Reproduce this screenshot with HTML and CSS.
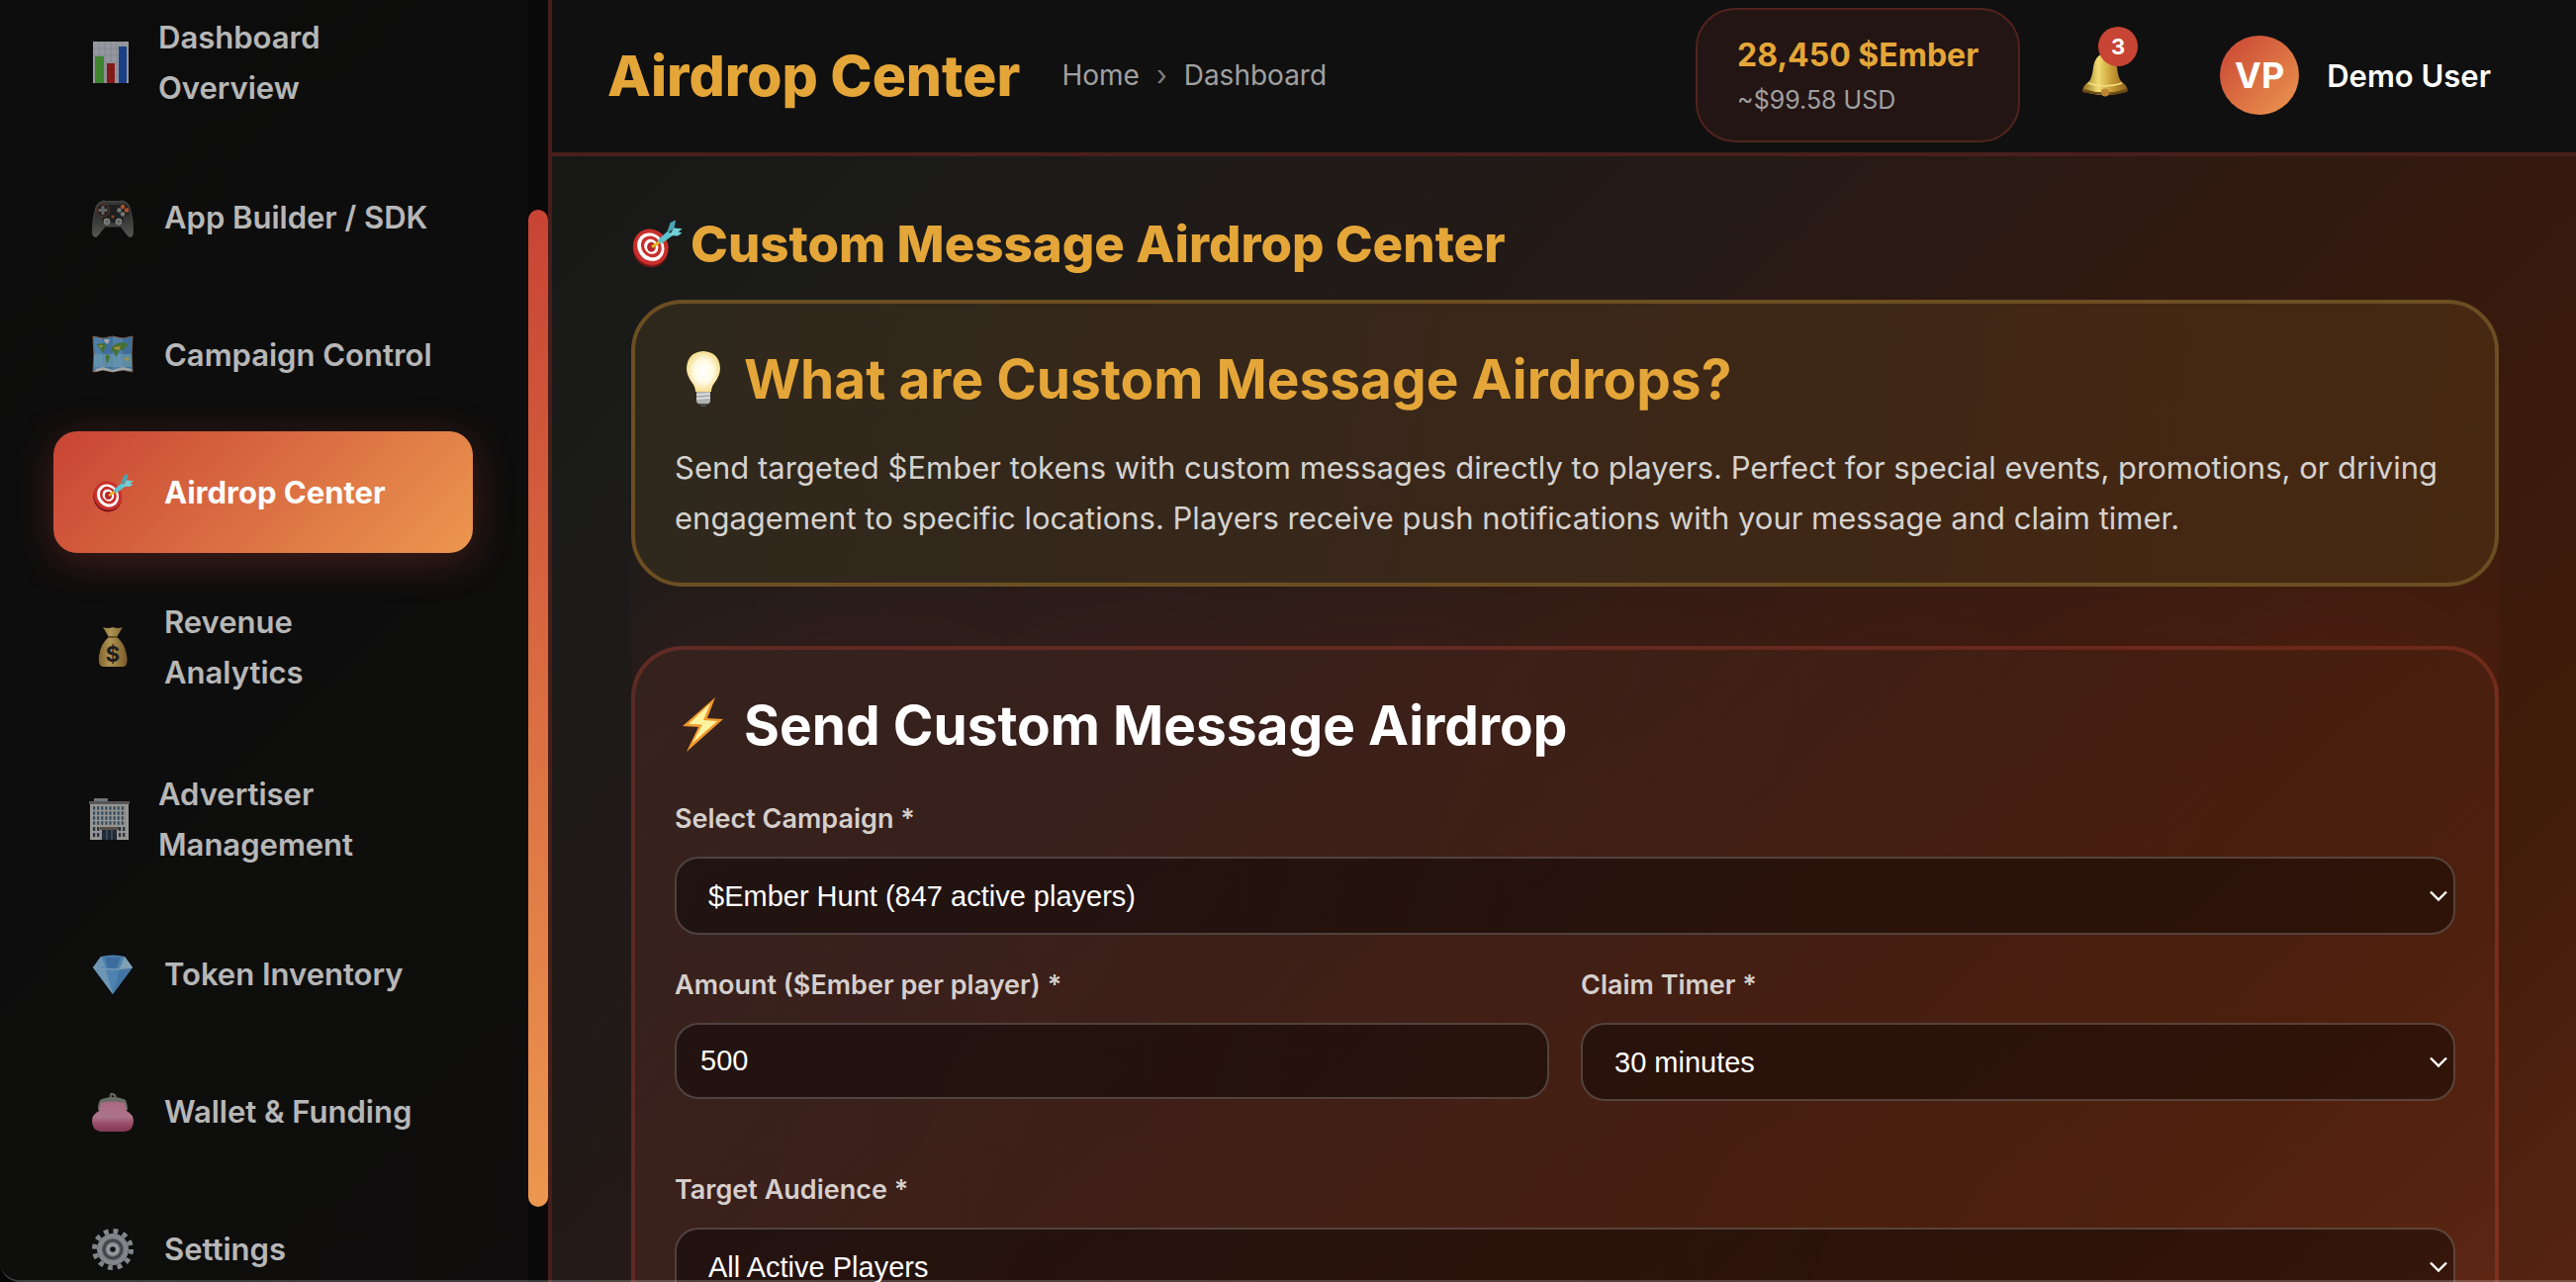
FILE: index.html
```html
<!DOCTYPE html>
<html lang="en">
<head>
<meta charset="utf-8">
<meta name="viewport" content="width=device-width, initial-scale=1">
<title>Airdrop Center</title>
<link rel="stylesheet" href="styles.css">
</head>
<body>
<svg class="defs" aria-hidden="true">
  <defs>
    <linearGradient id="brass" x1="0" y1="0" x2="1" y2="0">
      <stop offset="0" stop-color="#8a6a1c"/><stop offset=".35" stop-color="#f3dc72"/><stop offset=".65" stop-color="#c79a35"/><stop offset="1" stop-color="#8a5f1a"/>
    </linearGradient>
    <linearGradient id="sack" x1="0" y1="0" x2="1" y2="0">
      <stop offset="0" stop-color="#b48a3c"/><stop offset=".4" stop-color="#f2cf72"/><stop offset="1" stop-color="#a87a34"/>
    </linearGradient>
    <linearGradient id="pad" x1="0" y1="0" x2="0" y2="1">
      <stop offset="0" stop-color="#4c4f4e"/><stop offset=".35" stop-color="#3a3c3b"/><stop offset="1" stop-color="#747673"/>
    </linearGradient>
    <linearGradient id="purse" x1="0" y1="0" x2="0" y2="1">
      <stop offset="0" stop-color="#ef8db3"/><stop offset=".5" stop-color="#f0a2c0"/><stop offset=".75" stop-color="#d4648f"/><stop offset="1" stop-color="#b04a72"/>
    </linearGradient>
    <radialGradient id="glow" cx=".5" cy=".5" r=".55">
      <stop offset="0" stop-color="#ffffff"/><stop offset=".5" stop-color="#fffbe6"/><stop offset="1" stop-color="#f3d77c"/>
    </radialGradient>
    <symbol id="target" viewBox="0 0 42 42">
      <ellipse cx="15" cy="26" rx="14" ry="15" fill="#7f1518" transform="rotate(-35 15 25)"/>
      <ellipse cx="16" cy="24" rx="14" ry="15" fill="#c9302c" transform="rotate(-35 16 24)"/>
      <ellipse cx="16" cy="24" rx="10.500" ry="12" fill="#fff" transform="rotate(-35 16 24)"/>
      <ellipse cx="16.500" cy="24" rx="8" ry="9.200" fill="#c9302c" transform="rotate(-35 16 24)"/>
      <ellipse cx="16.500" cy="24" rx="5.500" ry="6.300" fill="#fff" transform="rotate(-35 16 24)"/>
      <ellipse cx="16.500" cy="24" rx="3.500" ry="4" fill="#b5262a"/>
      <path d="M17 24 L23 20" stroke="#e6b422" stroke-width="2.500"/>
      <path d="M21.500 18.500 L30 11 L34 14.500 L24.500 21.500 Z" fill="#5cc4cf"/>
      <path d="M29 13 L32 4 L36.500 2 L35 9 Z" fill="#4aa5b4"/>
      <path d="M31 14.500 L35 8.500 L42 9 L38.500 11.500 L41.500 12.500 L38 15 Z" fill="#73cfd8"/>
    </symbol>
  </defs>
</svg>

<div class="app">
  <aside class="sidebar">
    <nav class="nav" aria-label="Main">
      <a class="nav-item" href="#">
        <span class="nav-icon nav-icon--tight">
          <svg viewBox="0 0 42 42"><path fill="#cfd3dd" d="M4 0h36v42H4z"/><path stroke="#aab0c0" stroke-width=".6" d="M4 7h36M4 14h36M4 21h36M4 28h36M4 35h36M10 0v42M16 0v42M22 0v42M28 0v42M34 0v42"/><path fill="#53b83a" d="M6 15h9v27H6z"/><path fill="#b7201c" d="M18 22h8v20h-8z"/><path fill="#2457bd" d="M30 5h8v37h-8z"/></svg>
        </span>
        <span>Dashboard<br>Overview</span>
      </a>
      <a class="nav-item" href="#">
        <span class="nav-icon">
          <svg viewBox="0 0 42 42"><path fill="url(#pad)" stroke="#6d6f6c" stroke-width=".8" d="M9 5Q11 3 14 4.500H28Q31 3 33 5Q37 6 38.500 12Q42 24 41.500 37Q41 41 38 40.500Q36 40 33 35L29 30H13L9 35Q6 40 4 40.500Q1 41 .5 37Q0 24 3.500 12Q5 6 9 5Z"/><path fill="#262827" d="M13 8h16l3 18H10z"/><circle cx="11" cy="13.500" r="6.500" fill="#2a2b2a" stroke="#8a4a2c"/><path stroke="#858886" stroke-width="3" d="M11 9v9M6.500 13.500h9"/><circle cx="31" cy="13.500" r="6.500" fill="#2b2c2b"/><circle cx="31" cy="10" r="2.200" fill="#f07030"/><circle cx="35" cy="13.500" r="2.200" fill="#f07030"/><circle cx="27.500" cy="13.500" r="2.200" fill="#a4a6a5"/><circle cx="31" cy="17.500" r="2.200" fill="#a4a6a5"/><circle cx="21" cy="20" r="1.500" fill="#c7562a"/><g fill="#8d908e" stroke="#c6c8c6"><circle cx="15" cy="25" r="3"/><circle cx="27" cy="25" r="3"/></g></svg>
        </span>
        <span>App Builder / SDK</span>
      </a>
      <a class="nav-item" href="#">
        <span class="nav-icon">
          <svg viewBox="0 0 42 42"><path fill="#6bb0ea" stroke="#b08058" d="M1 2L11 4L21 2L31 4L41 2L40 20L41 38L31 36L21 38L11 36L1 38L2 20Z"/><path fill="#3f81bf" d="M11 4l10-2v36l-10-2zM31 4l9-2v36l-9-2z" opacity=".5"/><path fill="#9adcf5" d="M2 20h38v13H2z" opacity=".6"/><path fill="#5c9a48" d="M4 10l7-1 4 2-3 5-2 3-2-5zM14 20l4 2-1 4-2 4-1-6zM21 12l4-3 8-1 4 3-4 3-2 3-3-2-2 5-2 3-2-5-3-2z"/><path fill="#e8c84e" d="M22 13l7-1-2 4-4-1zM33 24l4-1v4l-4-1zM7 11l4 0-2 3z"/><path fill="#e5e9ea" d="M12 5l6 0-2 5-3-2zM4 35l7-2 10 3 10-3 9 2v2l-9-1-10 2-10-2-8 2z"/></svg>
        </span>
        <span>Campaign Control</span>
      </a>
      <a class="nav-item nav-item--active" href="#" aria-current="page">
        <span class="nav-icon"><svg viewBox="0 0 42 42"><use href="#target"/></svg></span>
        <span>Airdrop Center</span>
      </a>
      <a class="nav-item" href="#">
        <span class="nav-icon">
          <svg viewBox="0 0 42 42"><path fill="url(#sack)" d="M11 1Q16 3 21 1Q26 3 31 1L25 11Q33 17 35 29Q37 41 31 41H11Q6 41 7 30Q9 17 17 11Z"/><path stroke="#765524" stroke-width="1.500" d="M16 11h10"/><text class="sack-sign" x="21" y="36" text-anchor="middle">$</text></svg>
        </span>
        <span>Revenue<br>Analytics</span>
      </a>
      <a class="nav-item" href="#">
        <span class="nav-icon nav-icon--tight">
          <svg viewBox="0 0 42 42"><path fill="#9d9fa2" d="M5 0h14v4H5z"/><path fill="#d0cdca" d="M1 5h39v37H1z"/><path fill="#77757a" d="M0 3h41v3H0z"/><g stroke="#3f6784" stroke-width="3.500" stroke-dasharray="2.200 1.900"><path d="M4 10h33M4 15h33M4 20h33M4 25h33"/></g><g stroke="#2d4058" stroke-width="4" stroke-dasharray="2.200 1.900"><path d="M4 31h7M30 31h8M4 37h7M30 37h8"/></g><path fill="#76685f" d="M11 29h19v3H11z"/><path fill="#28384c" d="M13 32h15v10H13z"/><path stroke="#7c8a98" d="M18 32v10M23 32v10"/></svg>
        </span>
        <span>Advertiser<br>Management</span>
      </a>
      <a class="nav-item" href="#">
        <span class="nav-icon">
          <svg viewBox="0 0 42 42"><path fill="#6ab4f4" d="M9 3Q21 0 33 3L41 14L21 41L1 14Z"/><path fill="#96cef8" d="M9 3L14 14L1 14Z"/><path fill="#4f93d8" d="M13 3.500h16l-4 11h-9z"/><path fill="#b4e0fc" d="M33 3l8 11-13 1z"/><path fill="#94d0fa" d="M1 14l13 2 7 25z"/><path fill="#5a9fe4" d="M28 16l13-2-20 27z"/><path fill="none" stroke="#c5e5fb" stroke-width=".8" d="M1 14q20 4 40 0"/></svg>
        </span>
        <span>Token Inventory</span>
      </a>
      <a class="nav-item" href="#">
        <span class="nav-icon">
          <svg viewBox="0 0 42 42"><path fill="none" stroke="#8d9188" stroke-width="2" d="M19 7q-1-5 2-4t3 5"/><path fill="#8f938c" d="M10 8Q21 4 32 8Q36 9 36 19H6Q6 9 10 8Z"/><path fill="url(#purse)" d="M9 12Q21 9 33 12L35 20Q42 24 42 30Q42 40 33 41H9Q0 40 0 30Q0 24 7 20Z"/></svg>
        </span>
        <span>Wallet &amp; Funding</span>
      </a>
      <a class="nav-item" href="#">
        <span class="nav-icon">
          <svg viewBox="0 0 42 42"><circle cx="21" cy="21" r="18.500" fill="none" stroke="#b4bac0" stroke-width="5" stroke-dasharray="4.800 4.887"/><circle cx="21" cy="21" r="13.500" fill="#777c82" stroke="#b4bac0" stroke-width="5"/><circle cx="21" cy="21" r="9" fill="none" stroke="#4e5358" stroke-width="1.500"/><circle cx="21" cy="21" r="4.800" fill="#16171a" stroke="#ccd1d6" stroke-width="4"/></svg>
        </span>
        <span>Settings</span>
      </a>
    </nav>
    <div class="track"><div class="thumb"></div></div>
  </aside>

  <div class="page">
    <header class="topbar">
      <h1 class="topbar-title">Airdrop Center</h1>
      <nav class="crumbs" aria-label="Breadcrumb">
        <a href="#">Home</a><span class="crumb-sep">›</span><span>Dashboard</span>
      </nav>
      <div class="topbar-tools">
        <div class="balance">
          <strong class="balance-amount">28,450 $Ember</strong>
          <span class="balance-usd">~$99.58 USD</span>
        </div>
        <button class="bell" type="button" aria-label="Notifications">
          <svg viewBox="0 0 48 44"><path fill="url(#brass)" d="M24 0Q34 1 36 14Q37 24 40 28Q46 32 47 38Q36 42 24 42Q12 42 1 38Q2 32 8 28Q11 24 12 14Q14 1 24 0Z"/><path fill="#6c4a16" d="M2 36Q24 43 46 36L46 39Q36 42 24 42Q12 42 1 39Z"/><path fill="none" stroke="#f5df82" stroke-width="1.500" d="M7 30Q24 36 41 30"/><circle cx="24" cy="39.500" r="4" fill="#b98432"/></svg>
          <span class="badge">3</span>
        </button>
        <div class="user">
          <span class="avatar">VP</span>
          <span>Demo User</span>
        </div>
      </div>
    </header>

    <main class="content">
      <h2 class="page-title"><svg viewBox="0 0 42 42" aria-hidden="true"><use href="#target"/></svg>Custom Message Airdrop Center</h2>

      <section class="card card--info">
        <h3 class="card-title">
          <svg viewBox="0 0 56 56" aria-hidden="true"><path fill="url(#glow)" d="M29 0Q45 1 46 17Q46 24 41 31Q37 36 37 41H21Q21 36 17 31Q12 24 12 17Q13 1 29 0Z"/><path fill="#aeb0b2" d="M22 41h14v10q-1 3-7 3t-7-3z"/><path stroke="#e4e4e4" stroke-width="1.500" d="M22 44l14-1M22 48l14-1"/><path fill="#4a4b4d" d="M25 53h8l-2 3h-4z"/></svg>
          What are Custom Message Airdrops?
        </h3>
        <p class="card-text">Send targeted $Ember tokens with custom messages directly to players. Perfect for special events, promotions, or driving engagement to specific locations. Players receive push notifications with your message and claim timer.</p>
      </section>

      <section class="card card--form">
        <h3 class="card-title">
          <svg viewBox="0 0 56 56" aria-hidden="true"><path fill="#f0982e" d="M41 0L8 29L24 30L12 55L49 22L33 21Z"/><path fill="#fff3a0" d="M36 6L14 27L28 27.500L18 46L43 24L29 23Z"/></svg>
          Send Custom Message Airdrop
        </h3>
        <form class="form">
          <div class="field">
            <label for="campaign">Select Campaign *</label>
            <select id="campaign"><option>$Ember Hunt (847 active players)</option></select>
          </div>
          <div class="row">
            <div class="field">
              <label for="amount">Amount ($Ember per player) *</label>
              <input id="amount" type="text" inputmode="numeric" value="500">
            </div>
            <div class="field">
              <label for="timer">Claim Timer *</label>
              <select id="timer"><option>30 minutes</option></select>
            </div>
          </div>
          <div class="field">
            <label for="audience">Target Audience *</label>
            <select id="audience"><option>All Active Players</option></select>
          </div>
        </form>
      </section>
    </main>
  </div>
</div>
</body>
</html>
```
FILE: styles.css
```css
* { box-sizing: border-box; }

:root {
  --red: #c84434;
  --orange: #ec974f;
  --gold: #e4a638;
  --line: rgba(200, 68, 52, 0.3);
  --fire: linear-gradient(135deg, var(--red), var(--orange));
}

body {
  margin: 0;
  height: 100vh;
  overflow: hidden;
  font-family: Inter, "Liberation Sans", sans-serif;
  font-size: 31px;
  line-height: 51px;
  color: #fff;
  background: linear-gradient(135deg, #101010 0%, #1b1b1a 28%, #241a17 48%, #35190e 70%, #421c0a 87%, #562412 100%);
}

/* window edge */
body::after {
  content: "";
  position: fixed;
  inset: 0;
  border-bottom: 2px solid rgba(255, 255, 255, 0.2);
  border-bottom-left-radius: 20px;
  box-shadow: 0 0 0 20px #050505;
  pointer-events: none;
}

h1, h2, h3, p { margin: 0; }
a { color: inherit; text-decoration: none; }
.defs { position: absolute; width: 0; height: 0; }

.app { display: flex; height: 100%; }

/* Sidebar */
.sidebar {
  display: flex;
  flex: 0 0 558px;
  overflow: hidden;
  background: rgba(12, 12, 12, 0.85);
  border-right: 4px solid var(--line);
}

.nav {
  flex: 1;
  display: flex;
  flex-direction: column;
  gap: 16px;
  padding: 0 56px 0 54px;
  margin-top: -16px;
}

.nav-item {
  display: flex;
  flex-shrink: 0;
  align-items: center;
  gap: 28px;
  padding: 28px 36px;
  border-radius: 24px;
  font-weight: 600;
  opacity: 0.7;
}

.nav-item--active {
  opacity: 1;
  background: var(--fire);
  box-shadow: 0 8px 40px rgba(200, 68, 52, 0.3);
  font-weight: 700;
}

.nav-icon {
  display: flex;
  flex: 0 0 48px;
  align-items: center;
  justify-content: center;
  height: 67px;
}

.nav-icon--tight { flex-basis: 42px; }
.nav-icon svg { width: 42px; height: 42px; }
.sack-sign { font: 700 22px Inter, sans-serif; fill: #2b2428; }

.track {
  width: 20px;
  padding: 212px 0 76px;
  background: rgba(0, 0, 0, 0.3);
}

.thumb {
  height: 100%;
  border-radius: 10px;
  background: linear-gradient(var(--red), var(--orange));
}

/* Top bar */
.page {
  flex: 1;
  min-width: 0;
  display: flex;
  flex-direction: column;
}

.topbar {
  display: flex;
  flex: 0 0 158px;
  align-items: center;
  padding: 0 62px 2px 56px;
  background: #101010;
  border-bottom: 4px solid #481f1b;
}

.topbar-title {
  font-size: 57px;
  font-weight: 800;
  color: var(--gold);
}

.crumbs {
  display: flex;
  gap: 17px;
  margin-left: 42px;
  font-size: 28px;
  color: #a0a0a0;
}

.crumb-sep { color: #808080; }

.topbar-tools {
  display: flex;
  align-items: center;
  gap: 46px;
  margin-left: auto;
}

.balance {
  display: flex;
  flex-direction: column;
  padding: 20px 40px;
  border: 2px solid #52231e;
  border-radius: 40px;
  background: #231514;
}

.balance-amount {
  font-size: 32px;
  font-weight: 700;
  color: var(--gold);
}

.balance-usd {
  font-size: 25px;
  line-height: 41px;
  color: #a0a0a0;
}

.bell {
  position: relative;
  display: grid;
  place-items: center;
  width: 80px;
  height: 82px;
  margin-right: 6px;
  padding: 0;
  border: 0;
  background: none;
}

.bell svg { width: 48px; height: 44px; }

.badge {
  position: absolute;
  top: -8px;
  right: 7px;
  width: 40px;
  border-radius: 20px;
  background: var(--red);
  color: #fff;
  font: 700 22px/40px Inter, sans-serif;
  text-align: center;
}

.user {
  display: flex;
  align-items: center;
  gap: 28px;
  padding: 0 24px;
  font-weight: 600;
}

.avatar {
  width: 80px;
  border-radius: 50%;
  background: var(--fire);
  font-size: 36px;
  font-weight: 700;
  line-height: 80px;
  text-align: center;
}

/* Content */
.content {
  flex: 1;
  min-height: 0;
  margin: 0 78px 0 80px;
  padding-top: 56px;
  overflow: hidden;
}

.page-title {
  display: flex;
  align-items: center;
  gap: 8px;
  height: 64px;
  margin-bottom: 25px;
  font-size: 51px;
  font-weight: 800;
  color: var(--gold);
}

.page-title svg { width: 52px; height: 52px; }

.card {
  padding: 40px;
  border: 4px solid;
  border-radius: 52px;
}

.card--info {
  position: relative;
  background: linear-gradient(100deg, #2e281c, #38271a 40%, #432713 80%, #472911);
  border-color: #6b4e22;
  color: var(--gold);
}

.card--form {
  margin-top: 60px;
  padding-bottom: 120px;
  background: linear-gradient(110deg, rgba(200, 80, 65, 0.14), rgba(200, 76, 52, 0.08));
  border-color: var(--line);
  box-shadow: 0 0 400px rgba(200, 68, 52, 0.25);
}

.card-title {
  display: flex;
  align-items: center;
  gap: 14px;
  font-size: 55px;
  font-weight: 700;
  line-height: 72px;
}

.card-title svg { width: 56px; height: 56px; }

.card-text {
  margin-top: 28px;
  color: #d5d2cf;
}

.form {
  display: flex;
  flex-direction: column;
  gap: 28px;
  margin-top: 36px;
}

.field {
  display: flex;
  flex-direction: column;
  gap: 16px;
}

.row {
  display: grid;
  grid-template-columns: 1fr 1fr;
  align-items: start;
  gap: 32px;
  margin-bottom: 39px;
}

label {
  font-size: 27px;
  font-weight: 600;
  line-height: 45px;
  color: #d6cfcc;
}

input, select {
  width: 100%;
  height: 77px;
  margin: 0;
  padding: 0 24px;
  border: 2px solid rgba(255, 255, 255, 0.2);
  border-radius: 24px;
  outline: 0;
  background: rgba(0, 0, 0, 0.4);
  color: #fff;
  font: 29px "Liberation Sans", Arial, sans-serif;
}

select {
  height: 79px;
  padding: 0 32px;
  appearance: none;
  background-image: url("data:image/svg+xml,%3Csvg xmlns='http://www.w3.org/2000/svg' viewBox='0 0 18 12'%3E%3Cpath d='M1 1.500L9 9.500L17 1.500' fill='none' stroke='white' stroke-width='2.400'/%3E%3C/svg%3E");
  background-repeat: no-repeat;
  background-position: right 6px center;
  background-size: 18px 12px;
}
```
